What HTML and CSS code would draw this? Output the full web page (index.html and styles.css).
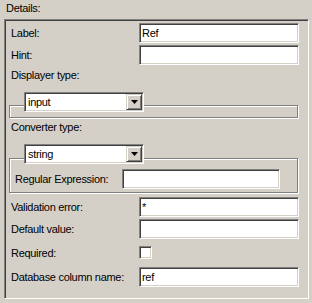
FILE: index.html
```html
<!DOCTYPE html>
<html lang="en">
<head>
    <meta charset="UTF-8">
    <title>Details</title>
    <link rel="stylesheet" href="styles.css">
</head>
<body>
    <div class="heading">Details:</div>
    <div class="group">
        <div class="row">
            <label class="caption">Label:</label>
            <input class="field" type="text" value="Ref">
        </div>
        <div class="row">
            <label class="caption">Hint:</label>
            <input class="field" type="text" value="">
        </div>

        <div class="caption-line">Displayer type:</div>
        <div class="titled">
            <div class="combo">
                <span class="combo-text">input</span>
                <span class="combo-btn"><svg width="7" height="4" viewBox="0 0 7 4"><path d="M0 0h7L3.5 4z" fill="#000"/></svg></span>
            </div>
            <div class="etched etched-empty"></div>
        </div>

        <div class="caption-line">Converter type:</div>
        <div class="titled">
            <div class="combo">
                <span class="combo-text">string</span>
                <span class="combo-btn"><svg width="7" height="4" viewBox="0 0 7 4"><path d="M0 0h7L3.5 4z" fill="#000"/></svg></span>
            </div>
            <div class="etched etched-regex">
                <div class="row row-inner">
                    <label class="caption">Regular Expression:</label>
                    <input class="field field-short" type="text" value="">
                </div>
            </div>
        </div>

        <div class="row row-after">
            <label class="caption">Validation error:</label>
            <input class="field" type="text" value="*">
        </div>
        <div class="row">
            <label class="caption">Default value:</label>
            <input class="field" type="text" value="">
        </div>
        <div class="row row-check">
            <label class="caption">Required:</label>
            <span class="check"></span>
        </div>
        <div class="row row-last">
            <label class="caption">Database column name:</label>
            <input class="field" type="text" value="ref">
        </div>
    </div>
</body>
</html>
```

FILE: styles.css
```css
body {
    margin: 0;
    width: 312px;
    height: 303px;
    overflow: hidden;
    background-color: #d4d0c8;
    font-family: "Liberation Sans", Arial, sans-serif;
    font-size: 11px;
    letter-spacing: -0.3px;
    color: #000;
}
.heading {
    height: 19px;
    line-height: 17px;
    padding-left: 6px;
}
.group {
    margin-left: 4px;
    width: 305px;
    height: 280px;
    box-sizing: border-box;
    padding: 3px 8px 0 4px;
    border: 1px solid;
    border-color: #808080 #fff #fff #808080;
    box-shadow: inset 1px 1px 0 #404040, inset -1px -1px 0 #d4d0c8;
}
.row {
    display: grid;
    grid-template-columns: 128px 160px;
    align-items: center;
    height: 20px;
    padding-left: 2px;
    margin-bottom: 2px;
}
.caption {
    white-space: nowrap;
}
.field {
    width: 160px;
    height: 20px;
    box-sizing: border-box;
    margin: 0;
    padding: 0 2px;
    font: inherit;
    letter-spacing: inherit;
    color: #000;
    background-color: #fff;
    border: 1px solid;
    border-color: #808080 #fff #fff #808080;
    box-shadow: inset 1px 1px 0 #404040, inset -1px -1px 0 #d4d0c8;
    outline: none;
}
.caption-line {
    height: 16px;
    line-height: 16px;
    padding-left: 2px;
}
.titled {
    margin-top: 9px;
}
.combo {
    position: relative;
    z-index: 1;
    display: flex;
    width: 120px;
    height: 20px;
    box-sizing: border-box;
    margin-left: 15px;
    background-color: #fff;
    border: 1px solid;
    border-color: #808080 #fff #fff #808080;
    box-shadow: inset 1px 1px 0 #404040, inset -1px -1px 0 #d4d0c8;
    padding: 1px;
}
.combo-text {
    flex: 1;
    line-height: 16px;
    padding-left: 2px;
}
.combo-btn {
    display: flex;
    align-items: center;
    justify-content: center;
    width: 16px;
    height: 16px;
    box-sizing: border-box;
    background-color: #d4d0c8;
    border: 1px solid;
    border-color: #d4d0c8 #404040 #404040 #d4d0c8;
    box-shadow: inset 1px 1px 0 #fff, inset -1px -1px 0 #808080;
}
.etched {
    width: 289px;
    box-sizing: border-box;
    margin-top: -7px;
    border: 1px solid #808080;
    box-shadow: inset 1px 1px 0 #fff, 1px 1px 0 #fff;
}
.etched-empty {
    height: 13px;
}
.titled + .caption-line {
    margin-top: 1px;
}
.etched-regex {
    height: 35px;
    margin-top: -6px;
    padding: 10px 0 0 5px;
}
.row-inner {
    grid-template-columns: 107px 158px;
    padding-left: 0;
}
.field-short {
    width: 158px;
}
.row-after {
    margin-top: 4px;
}
.row-check {
    height: 23px;
    margin-bottom: 3px;
}
.check {
    width: 13px;
    height: 13px;
    box-sizing: border-box;
    background-color: #fff;
    border: 1px solid;
    border-color: #808080 #fff #fff #808080;
    box-shadow: inset 1px 1px 0 #404040, inset -1px -1px 0 #d4d0c8;
}
```
